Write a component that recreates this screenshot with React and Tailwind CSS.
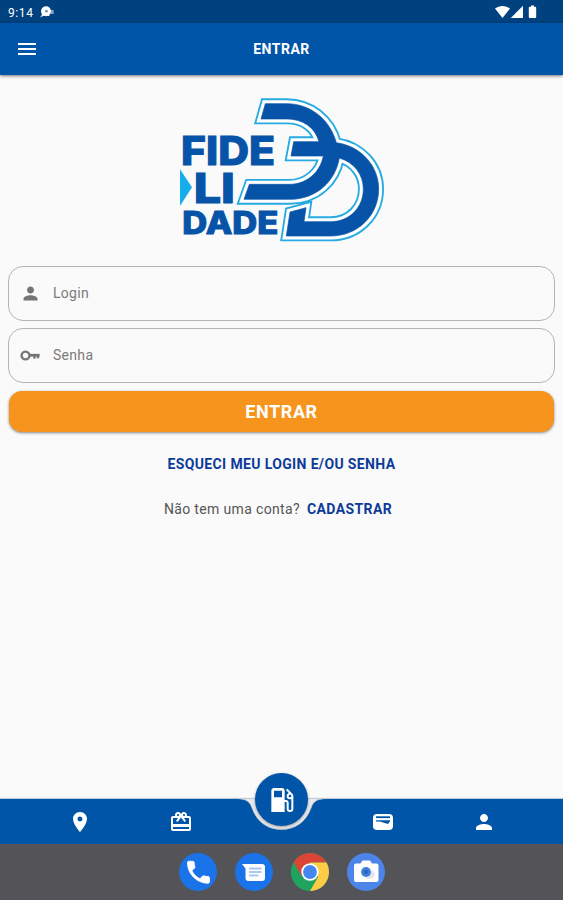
import {
  MdCardGiftcard,
  MdLocalGasStation,
  MdLocationOn,
  MdMenu,
  MdPerson,
  MdVpnKey,
} from "react-icons/md";

const LOGO_PATH =
  "M286 56H350C420 56 480 102 499 173C573 183 626 242 626 312C626 391 564 453 482 453H349L360 381L408 368L402 410H482C540 410 580 366 580 312C580 268 552 232 508 219C496 290 438 343 360 343H222L238 298H358C408 298 450 264 460 213H363L371 170H447C435 128 400 102 350 102H273Z";

function StatusBar() {
  return (
    <div className="flex h-[23px] shrink-0 items-center bg-[#00427f] pl-2 pr-[25px] text-white">
      <span className="pt-[2px] text-[12px] leading-none tracking-[0.6px]">9:14</span>
      <svg className="ml-[6px] h-3 w-[15px]" viewBox="0 0 15 12">
        <path d="M0 11.5L3 7V4L10 10L4 9.5Z" fill="#fff" />
        <circle cx="6" cy="5.2" r="5" fill="#fff" />
        <circle cx="6.4" cy="5.2" r="1.4" fill="#7795b5" />
        <path d="M11 4h2.6v4H11z" fill="#8ca8c4" />
      </svg>
      <svg className="ml-auto h-[14px] w-[43px]" viewBox="0 0 43 14">
        <path d="M0 3.5C4.500 .1 10.500 .1 15 3.500L7.500 13Z" fill="#fff" />
        <path d="M28 .8V13H15.800Z" fill="#fff" />
        <path d="M36 .5h3v1.300h1.200q1 0 1 1V12q0 1-1 1h-5.400q-1 0-1-1V2.800q0-1 1-1H36Z" fill="#fff" />
      </svg>
    </div>
  );
}

function Logo() {
  return (
    <svg className="h-[170px] w-[230px]" viewBox="0 0 690 510">
      <g fill="#0753a8" stroke="#0753a8" strokeWidth="3" className="font-['Inter',sans-serif] font-extrabold">
        <text x="33" y="241" fontSize="117" textLength="282" lengthAdjust="spacingAndGlyphs">FIDE</text>
        <text x="71" y="355" fontSize="124" textLength="124" lengthAdjust="spacingAndGlyphs">LI</text>
        <text x="37" y="446" fontSize="92" textLength="288" lengthAdjust="spacingAndGlyphs">DADE</text>
      </g>
      <path d="M30 253L66 307L30 363Z" fill="#16aeea" />
      <path d={LOGO_PATH} fill="none" stroke="#27aae1" strokeWidth="32" />
      <path d={LOGO_PATH} fill="#0753a8" stroke="#fff" strokeWidth="21" />
      <path d={LOGO_PATH} fill="#0753a8" stroke="#0753a8" strokeWidth="2" />
    </svg>
  );
}

function Field({ icon: Icon, label }) {
  return (
    <div className="flex h-[55px] items-center rounded-[15px] border border-[#b4b4b4] pl-[11px]">
      <Icon className="size-[21px] text-[#757575]" />
      <span className="ml-3 pb-px text-[14px] tracking-[0.3px] text-[#7b7b7b]">{label}</span>
    </div>
  );
}

// key with a round, hollow bow
function KeyIcon({ className }) {
  return (
    <svg className={className} viewBox="0 0 24 24" fill="none" stroke="currentColor">
      <circle cx="6.300" cy="12" r="4.500" strokeWidth="2.700" />
      <path d="M10.500 11.700H22.500" strokeWidth="3.200" />
      <path d="M16.500 12v3.800M20.500 12v3" strokeWidth="2.600" />
    </svg>
  );
}

function WalletIcon() {
  return (
    <svg className="size-6" viewBox="0 0 24 24">
      <rect x="2" y="4" width="20" height="16" rx="4" fill="currentColor" />
      <path d="M5 7.200H19" stroke="#0055a8" strokeWidth="1.800" />
      <path d="M5 10.200H19V11.300L17.500 13.500Q17 14 16 13.700L9 11.500H5Z" fill="#0055a8" />
    </svg>
  );
}

function BottomNav() {
  return (
    <nav className="relative flex h-[45px] shrink-0 items-center justify-center bg-[#0055a8] text-white shadow-[0_-1px_1px_#c4cbd8]">
      <div className="flex w-[101px] justify-center"><MdLocationOn className="size-6" /></div>
      <div className="flex w-[101px] justify-center"><MdCardGiftcard className="size-6" /></div>
      <div className="w-[101px]" />
      <div className="flex w-[101px] justify-center"><WalletIcon /></div>
      <div className="flex w-[101px] justify-center"><MdPerson className="size-6" /></div>
      {/* notch under the fuel button */}
      <svg className="absolute top-0 left-[238px] h-8 w-[88px]" viewBox="0 0 88 32">
        <path d="M0 0C8 0 12 3 14 9C19 23 30 30.500 43.500 30.500S68 23 73 9C75 3 79 0 87 0Z" fill="#e9eaed" />
        <path d="M4 .3C9 .5 12 3 14 9C19 23 30 30.500 43.500 30.500S68 23 73 9C75 3 78 .5 83 .3" fill="none" stroke="#b7c0ce" strokeWidth=".8" />
      </svg>
      <button className="absolute -top-[26px] left-[255px] flex size-[53px] items-center justify-center rounded-full bg-[#0055a8] shadow-[0_1px_3px_#0005]">
        <MdLocalGasStation className="size-8" />
      </button>
    </nav>
  );
}

function Dock() {
  return (
    <div className="flex h-14 shrink-0 items-center justify-center gap-[18px] bg-[#545357]">
      <svg className="size-[38px]" viewBox="0 0 38 38">
        <circle cx="19" cy="19" r="19" fill="#1a73e8" />
        <path
          transform="translate(4.800 4.600) scale(1.220)"
          d="M6.620 10.790c1.440 2.830 3.760 5.140 6.590 6.590l2.200-2.200c.27-.27.67-.36 1.020-.24 1.120.37 2.330.57 3.570.57.550 0 1 .45 1 1V20c0 .55-.45 1-1 1-9.390 0-17-7.610-17-17 0-.55.45-1 1-1h3.500c.55 0 1 .45 1 1 0 1.250.2 2.450.57 3.570.11.35.03.74-.25 1.020l-2.200 2.200z"
          fill="#fff"
          stroke="#fff"
          strokeWidth=".7"
        />
      </svg>
      <svg className="size-[38px]" viewBox="0 0 38 38">
        <circle cx="19" cy="19" r="19" fill="#1a73e8" />
        <path d="M7 11H27q3 0 3 3V25q0 3-3 3H13.500q-3 0-3-3V15.500Z" fill="#fff" />
        <path d="M14 15.500H26.500M14 19H26.500M14 22.500H23.500" stroke="#a9c8f5" strokeWidth="1.800" />
      </svg>
      <svg className="size-[38px]" viewBox="0 0 38 38">
        <circle cx="19" cy="19" r="19" fill="#1fa35f" />
        <path d="M2.550 9.500A19 19 0 0 1 35.450 9.500H19L10.800 23.800Z" fill="#dc4435" />
        <path d="M2.550 9.500L10.800 23.800L19 28L19 38A19 19 0 0 1 2.550 9.500Z" fill="#1fa35f" />
        <path d="M19 9.500H35.450A19 19 0 0 1 19 38L27.200 23.800Z" fill="#fbcc44" />
        <circle cx="19" cy="19" r="8.700" fill="#fff" />
        <circle cx="19" cy="19" r="6.900" fill="#4587ee" />
      </svg>
      <svg className="size-[38px]" viewBox="0 0 38 38">
        <circle cx="19" cy="19" r="19" fill="#4c84e8" />
        <path d="M13.500 10.500L15.500 7.500H23L25 10.500H29.500q2 0 2 2V27q0 2-2 2H9q-2 0-2-2V12.500q0-2 2-2Z" fill="#fff" />
        <path d="M19 25L25 17L28 21Q27 26 21 26Z" fill="#e1e5ec" />
        <circle cx="19" cy="19" r="4.900" fill="#3f7ddd" />
        <circle cx="19" cy="19" r="2" fill="#2864bf" />
      </svg>
    </div>
  );
}

export default function App() {
  return (
    <div className="flex h-[900px] w-[563px] flex-col overflow-hidden bg-[#fafafa] font-['Roboto',sans-serif]">
      <StatusBar />
      <header className="grid h-[52px] shrink-0 grid-cols-3 items-center bg-[#0055a8] text-white shadow-[0_1px_3px_#0008]">
        <MdMenu className="ml-[15px] size-6" />
        <h1 className="text-center text-[14px] font-bold tracking-[0.5px]">ENTRAR</h1>
      </header>
      <main className="flex flex-1 flex-col px-2 pt-[10px]">
        <div className="flex h-[181px] justify-center pl-[7px]">
          <Logo />
        </div>
        <form className="flex flex-col gap-[7px]">
          <Field icon={MdPerson} label="Login" />
          <Field icon={KeyIcon} label="Senha" />
          <button
            type="button"
            className="mx-px mt-px h-[41px] rounded-[13px] bg-[#f7941e] text-[18px] font-bold tracking-[0.6px] text-white shadow-[0_1px_3px_#0007]"
          >
            ENTRAR
          </button>
        </form>
        <a className="mt-[22px] text-center text-[14px] font-bold leading-5 tracking-[0.36px] text-[#0d3b99]">ESQUECI MEU LOGIN E/OU SENHA</a>
        <p className="mt-[25px] flex justify-center gap-[7px] pr-[7px] text-[14px] leading-5 text-[#555]">
          <span className="tracking-[0.35px]">Não tem uma conta?</span>
          <a className="font-bold tracking-[0.4px] text-[#0d3b99]">CADASTRAR</a>
        </p>
      </main>
      <BottomNav />
      <Dock />
    </div>
  );
}
